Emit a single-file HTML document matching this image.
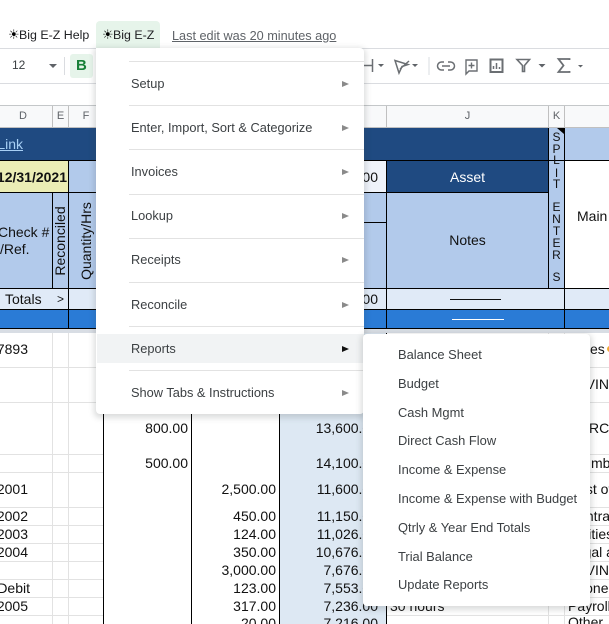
<!DOCTYPE html>
<html><head><meta charset="utf-8"><style>
html,body{margin:0;padding:0;background:#fff}
#p{position:relative;width:609px;height:624px;overflow:hidden;background:#fff;font-family:"Liberation Sans",sans-serif}
#p div{position:absolute}
.t{white-space:nowrap;line-height:16px;font-size:14px;color:#111;position:absolute}
.m{white-space:nowrap;line-height:16px;font-size:12.8px;color:#3c4043;position:absolute;left:131px}
.s{white-space:nowrap;line-height:16px;font-size:12.9px;color:#3c4043;position:absolute;left:398px}
.a{position:absolute;left:342px;width:0;height:0;border-left:7px solid #8a8a8a;border-top:3.5px solid transparent;border-bottom:3.5px solid transparent}
.k{position:absolute;left:549px;width:15px;text-align:center;font-size:12px;line-height:12px;color:#111}
.h{position:absolute;top:109px;font-size:11px;line-height:14px;color:#5f6368;text-align:center}
.g{background:#e2e2e2}
.b{background:#000}
.sun{display:inline-block;width:11px;font-family:'DejaVu Sans';font-size:13px;color:#000;text-align:center}
</style></head><body><div id="p">
<!-- chrome -->
<span class="t" style="left:8px;top:27px;font-size:12.4px;color:#202124"><span class="sun">☀</span>Big E-Z Help</span>
<div style="left:96px;top:21px;width:64px;height:28px;background:#e6f4ea;border-radius:4px 4px 0 0"></div>
<span class="t" style="left:102px;top:27px;font-size:12.4px;color:#202124"><span class="sun">☀</span>Big E-Z</span>
<span class="t" style="left:172px;top:28px;font-size:12.7px;color:#5f6368;text-decoration:underline">Last edit was 20 minutes ago</span>
<div style="left:0;top:48px;width:609px;height:1px;background:#dadce0"></div>
<div style="left:0;top:83px;width:609px;height:1px;background:#dadce0"></div>
<div style="left:0;top:105px;width:609px;height:1px;background:#c4c7c9"></div>
<span class="t" style="left:12px;top:57px;font-size:12px;color:#3c4043">12</span>
<div style="left:49px;top:64px;width:0;height:0;border:4px solid transparent;border-top:4px solid #5f6368;border-bottom:0"></div>
<div style="left:64px;top:57px;width:1px;height:18px;background:#dadce0"></div>
<div style="left:70px;top:54px;width:23px;height:24px;background:#e6f4ea;border-radius:3px"></div>
<span class="t" style="left:76px;top:58px;font-weight:bold;font-size:15px;color:#188038">B</span>
<svg style="position:absolute;left:360px;top:50px" width="249" height="32" fill="none" stroke="#6b6f73" stroke-width="1.5">
<path d="M4 15.500H12M12.500 9V22"/>
<path d="M18 14l3 3 3-3z" fill="#5f6368" stroke="none"/>
<path d="M35 10.500L48 14.500 42 16.500 39 23 35 10.500zM40 19L49 11"/>
<path d="M52 14l3 3 3-3z" fill="#5f6368" stroke="none"/>
<path d="M69 7V25" stroke="#dadce0" stroke-width="1"/>
<path d="M84 12h-2.500a4 4 0 0 0 0 8H84M88 12h2.500a4 4 0 0 1 0 8H88M82 16h8"/>
<path d="M106 10h11v11h-8l-3 3zM111.500 12.500v6M108.500 15.500h6" stroke-width="1.400"/>
<rect x="130.500" y="9.500" width="12" height="12.500" stroke-width="2"/>
<path d="M133.500 19v-3M136.500 19v-6M139.500 19v-2" stroke-width="1.500"/>
<path d="M157 9.500h12.500l-5 6v6h-2v-6z" stroke-width="1.600"/>
<path d="M178.500 14l3.500 3.500 3.500-3.500z" fill="#5f6368" stroke="none"/>
<path d="M209.500 10V9H198.500l5 6.500-5 6.500h11v-1" stroke-width="1.800"/>
<path d="M218 15l2.500 2.500 2.500-2.500z" fill="#5f6368" stroke="none"/>
</svg>
<!-- col header -->
<div style="left:0;top:106px;width:609px;height:21px;background:#f8f9fa"></div>
<div style="left:0;top:127px;width:609px;height:1px;background:#c0c0c0"></div>
<div style="left:52px;top:106px;width:1px;height:21px;background:#c0c0c0"></div>
<div style="left:68px;top:106px;width:1px;height:21px;background:#c0c0c0"></div>
<div style="left:386px;top:106px;width:1px;height:21px;background:#c0c0c0"></div>
<div style="left:548px;top:106px;width:1px;height:21px;background:#c0c0c0"></div>
<div style="left:564px;top:106px;width:1px;height:21px;background:#c0c0c0"></div>
<span class="h" style="left:0;width:46px">D</span><span class="h" style="left:53px;width:15px">E</span><span class="h" style="left:69px;width:34px">F</span><span class="h" style="left:387px;width:161px">J</span><span class="h" style="left:549px;width:15px">K</span>
<!-- sheet header fills -->
<div style="left:0;top:128px;width:548px;height:32px;background:#1f4a81"></div>
<div style="left:549px;top:128px;width:60px;height:32px;background:#b2caeb"></div>
<div style="left:0;top:161px;width:68px;height:31px;background:#ebedb5"></div>
<div style="left:69px;top:161px;width:291px;height:31px;background:#b2caeb"></div>
<div style="left:360px;top:161px;width:26px;height:31px;background:#eff3fa"></div>
<div style="left:387px;top:161px;width:161px;height:31px;background:#1f4a81"></div>
<div style="left:0;top:193px;width:548px;height:95px;background:#b2caeb"></div>
<div style="left:549px;top:128px;width:15px;height:160px;background:#b2caeb"></div>
<div style="left:0;top:289px;width:609px;height:20px;background:#e0eaf7"></div>
<div style="left:0;top:310px;width:609px;height:18px;background:#2a7bd6"></div>
<div style="left:0;top:329px;width:609px;height:4px;background:#d8dde4"></div>
<!-- I col fill -->
<div style="left:280px;top:333px;width:106px;height:291px;background:#dde8f3"></div>
<!-- black lines -->
<div class="b" style="left:0;top:160px;width:609px;height:1px"></div>
<div class="b" style="left:0;top:192px;width:548px;height:1px"></div>
<div class="b" style="left:0;top:288px;width:609px;height:1px"></div>
<div class="b" style="left:0;top:309px;width:609px;height:1px"></div>
<div class="b" style="left:0;top:328px;width:609px;height:1px"></div>
<div class="b" style="left:360px;top:222px;width:26px;height:1px"></div>
<div class="b" style="left:52px;top:192px;width:1px;height:96px"></div>
<div class="b" style="left:68px;top:160px;width:1px;height:168px"></div>
<div class="b" style="left:386px;top:160px;width:1px;height:168px"></div>
<div class="b" style="left:548px;top:128px;width:1px;height:160px"></div>
<div class="b" style="left:564px;top:128px;width:1px;height:200px"></div>
<div style="left:557px;top:128px;width:0;height:0;border-top:6px solid #000;border-left:7px solid transparent"></div>
<!-- grid -->
<div class="g" style="left:0;top:367px;width:103px;height:1px"></div><div class="g" style="left:0;top:402px;width:103px;height:1px"></div><div class="g" style="left:0;top:454px;width:103px;height:1px"></div><div class="g" style="left:0;top:472px;width:103px;height:1px"></div><div class="g" style="left:0;top:507px;width:103px;height:1px"></div><div class="g" style="left:0;top:525px;width:103px;height:1px"></div><div class="g" style="left:0;top:543px;width:103px;height:1px"></div><div class="g" style="left:0;top:561px;width:103px;height:1px"></div><div class="g" style="left:0;top:579px;width:103px;height:1px"></div><div class="g" style="left:0;top:597px;width:103px;height:1px"></div><div class="g" style="left:0;top:615px;width:103px;height:1px"></div>
<div class="g" style="left:387px;top:615px;width:222px;height:1px"></div><div class="g" style="left:565px;top:367px;width:44px;height:1px"></div><div class="g" style="left:565px;top:402px;width:44px;height:1px"></div><div class="g" style="left:565px;top:454px;width:44px;height:1px"></div><div class="g" style="left:565px;top:472px;width:44px;height:1px"></div><div class="g" style="left:565px;top:507px;width:44px;height:1px"></div><div class="g" style="left:565px;top:525px;width:44px;height:1px"></div><div class="g" style="left:565px;top:543px;width:44px;height:1px"></div><div class="g" style="left:565px;top:561px;width:44px;height:1px"></div><div class="g" style="left:565px;top:579px;width:44px;height:1px"></div><div class="g" style="left:565px;top:597px;width:44px;height:1px"></div>
<div class="g" style="left:52px;top:333px;width:1px;height:291px"></div><div class="g" style="left:68px;top:333px;width:1px;height:291px"></div><div class="g" style="left:548px;top:333px;width:1px;height:291px"></div><div class="g" style="left:564px;top:333px;width:1px;height:291px"></div>
<div class="b" style="left:103px;top:333px;width:1px;height:291px"></div><div class="b" style="left:191px;top:333px;width:1px;height:291px"></div><div class="b" style="left:279px;top:333px;width:1px;height:291px"></div><div class="b" style="left:386px;top:333px;width:1px;height:291px"></div>
<!-- header texts -->
<span class="t" style="right:586px;top:136px;color:#a8d0f5;text-decoration:underline">Link</span>
<span class="t" style="right:542px;top:169px;font-weight:bold">12/31/2021</span>
<span class="t" style="left:-2px;top:224px">Check #</span>
<span class="t" style="left:0;top:241px">/Ref.</span>
<span class="t" style="left:5px;top:291px">Totals</span>
<span class="t" style="left:57px;top:291px;font-size:12px">&gt;</span>
<span class="t" style="left:60px;top:240.500px;transform:translate(-50%,-50%) rotate(-90deg)">Reconciled</span>
<span class="t" style="left:86px;top:240.500px;transform:translate(-50%,-50%) rotate(-90deg)">Quantity/Hrs</span>
<span class="t" style="right:231px;top:169px">00</span>
<span class="t" style="right:231px;top:291px">00</span>
<span class="t" style="left:387px;width:161px;text-align:center;top:169px;color:#fff">Asset</span>
<span class="t" style="left:387px;width:161px;text-align:center;top:232px">Notes</span>
<div style="left:450px;top:299px;width:51px;height:1px;background:#111"></div>
<div style="left:452px;top:319px;width:52px;height:1px;background:#fff"></div>
<span class="t" style="left:577px;top:208px">Main</span>
<span class="k" style="top:131px">S</span><span class="k" style="top:143px">P</span><span class="k" style="top:154px">L</span><span class="k" style="top:167px">I</span><span class="k" style="top:178px">T</span><span class="k" style="top:201px">E</span><span class="k" style="top:213px">N</span><span class="k" style="top:225px">T</span><span class="k" style="top:237px">E</span><span class="k" style="top:249px">R</span><span class="k" style="top:271px">S</span>
<!-- data -->
<span class="t" style="right:581px;top:341px">7893</span>
<span class="t" style="right:581px;top:481px">2001</span><span class="t" style="right:581px;top:508px">2002</span><span class="t" style="right:581px;top:526px">2003</span><span class="t" style="right:581px;top:544px">2004</span><span class="t" style="right:579px;top:580px">Debit</span><span class="t" style="right:581px;top:598px">2005</span>
<span class="t" style="right:421px;top:420px">800.00</span><span class="t" style="right:421px;top:455px">500.00</span>
<span class="t" style="right:333px;top:481px">2,500.00</span><span class="t" style="right:333px;top:508px">450.00</span><span class="t" style="right:333px;top:526px">124.00</span><span class="t" style="right:333px;top:544px">350.00</span><span class="t" style="right:333px;top:562px">3,000.00</span><span class="t" style="right:333px;top:580px">123.00</span><span class="t" style="right:333px;top:598px">317.00</span><span class="t" style="right:333px;top:615px">20.00</span>
<span class="t" style="right:231px;top:420px">13,600.00</span><span class="t" style="right:231px;top:455px">14,100.00</span><span class="t" style="right:231px;top:481px">11,600.00</span><span class="t" style="right:231px;top:508px">11,150.00</span><span class="t" style="right:231px;top:526px">11,026.00</span><span class="t" style="right:231px;top:544px">10,676.00</span><span class="t" style="right:231px;top:562px">7,676.00</span><span class="t" style="right:231px;top:580px">7,553.00</span><span class="t" style="right:231px;top:598px">7,236.00</span><span class="t" style="right:231px;top:615px">7,216.00</span>
<span class="t" style="left:390px;top:598px">30 hours</span>
<span class="t" style="left:590px;top:341px">es</span>
<div style="left:607px;top:346px;width:6px;height:6px;border-radius:50%;background:#f0a830"></div>
<span class="t" style="left:568px;top:376px">SAVINGS</span>
<span class="t" style="left:589px;top:420px">RC</span>
<span class="t" style="left:591px;top:455px">mber</span>
<span class="t" style="left:568px;top:481px">Cost of</span>
<span class="t" style="left:568px;top:508px">Contract</span>
<span class="t" style="left:568px;top:526px">Utilities</span>
<span class="t" style="left:568px;top:544px">Legal and</span>
<span class="t" style="left:568px;top:562px">SAVINGS</span>
<span class="t" style="left:568px;top:580px">Phones</span>
<span class="t" style="left:568px;top:598px">Payroll</span>
<span class="t" style="left:568px;top:614px">Other</span>
<!-- main menu -->
<div style="left:96px;top:48px;width:268px;height:366px;background:#fff;border-radius:0 4px 4px 4px;box-shadow:0 2px 6px 2px rgba(60,64,67,.18)"></div>
<div style="left:97px;top:334px;width:267px;height:29px;background:#f1f3f4"></div>
<div class="g" style="left:129px;top:61px;width:235px;height:1px"></div><div class="g" style="left:129px;top:105px;width:235px;height:1px"></div><div class="g" style="left:129px;top:149px;width:235px;height:1px"></div><div class="g" style="left:129px;top:194px;width:235px;height:1px"></div><div class="g" style="left:129px;top:238px;width:235px;height:1px"></div><div class="g" style="left:129px;top:282px;width:235px;height:1px"></div><div class="g" style="left:129px;top:326px;width:235px;height:1px"></div><div class="g" style="left:129px;top:370px;width:235px;height:1px"></div>
<span class="m" style="top:76px">Setup</span><span class="m" style="top:120px">Enter, Import, Sort &amp; Categorize</span><span class="m" style="top:164px">Invoices</span><span class="m" style="top:208px">Lookup</span><span class="m" style="top:252px">Receipts</span><span class="m" style="top:297px">Reconcile</span><span class="m" style="top:341px">Reports</span><span class="m" style="top:385px">Show Tabs &amp; Instructions</span>
<i class="a" style="top:80.500px"></i><i class="a" style="top:124.500px"></i><i class="a" style="top:168.500px"></i><i class="a" style="top:212.500px"></i><i class="a" style="top:256.500px"></i><i class="a" style="top:301.500px"></i><i class="a" style="top:345.500px;border-left-color:#111"></i><i class="a" style="top:389.500px"></i>
<!-- submenu -->
<div style="left:363px;top:334px;width:227px;height:272px;background:#fff;border-radius:4px;box-shadow:0 2px 6px 2px rgba(60,64,67,.18)"></div>
<span class="s" style="top:347px">Balance Sheet</span><span class="s" style="top:376px">Budget</span><span class="s" style="top:405px">Cash Mgmt</span><span class="s" style="top:433px">Direct Cash Flow</span><span class="s" style="top:462px">Income &amp; Expense</span><span class="s" style="top:491px">Income &amp; Expense with Budget</span><span class="s" style="top:520px">Qtrly &amp; Year End Totals</span><span class="s" style="top:549px">Trial Balance</span><span class="s" style="top:577px">Update Reports</span>
</div></body></html>
